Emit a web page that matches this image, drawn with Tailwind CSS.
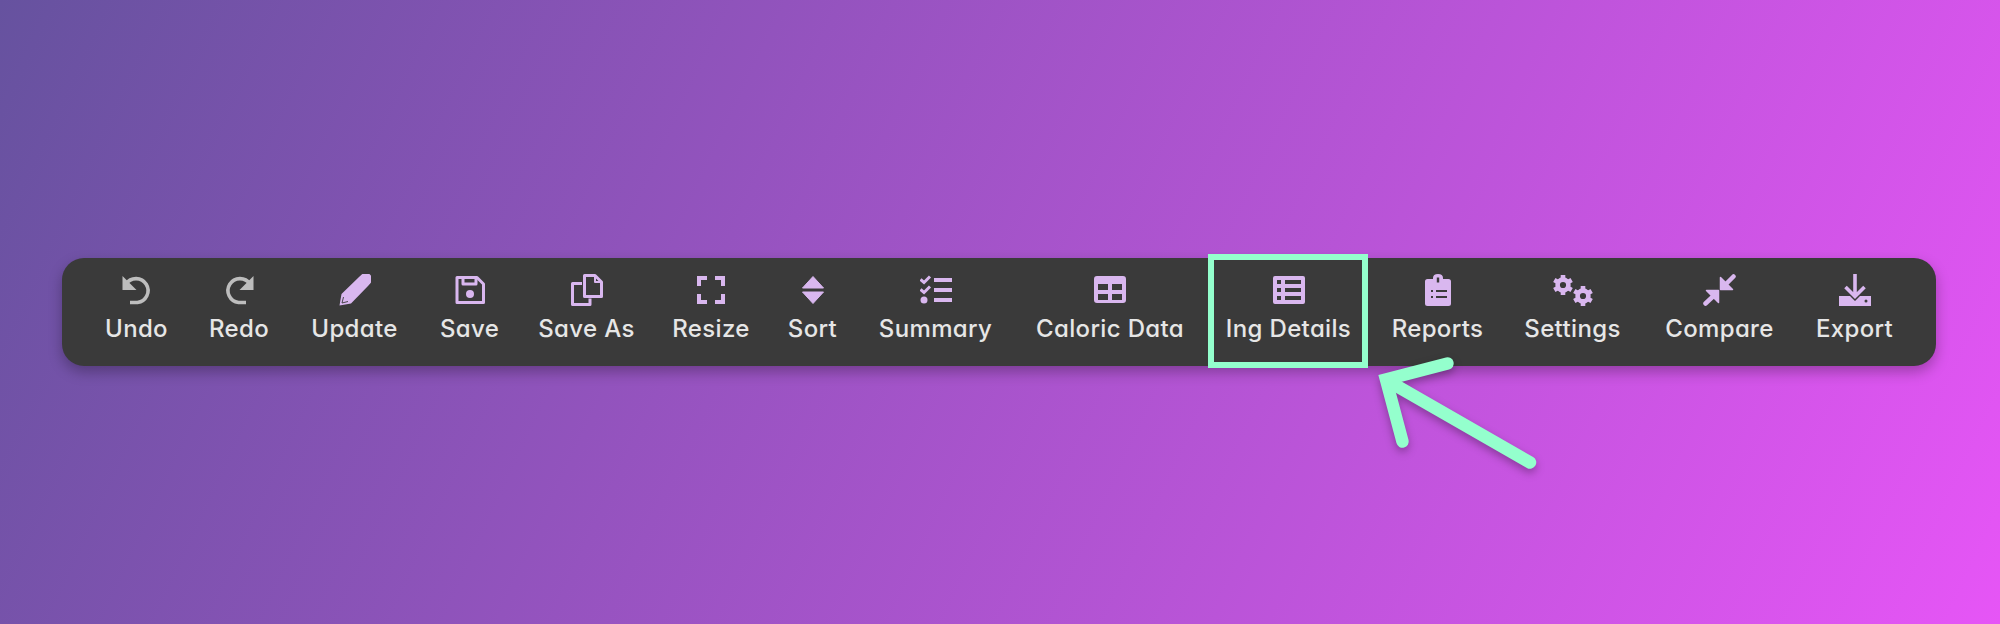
<!DOCTYPE html>
<html><head><meta charset="utf-8"><script src="https://cdn.jsdelivr.net/npm/@tailwindcss/browser@4"></script></head>
<body class="m-0">
<div class="relative w-[2000px] h-[624px] overflow-hidden pt-[258px] pl-[62px] bg-[linear-gradient(115deg,#66529f_0%,#e655f6_100%)] font-['Inter','Liberation_Sans',sans-serif] [font-feature-settings:'cv11']">
  <div class="relative flex w-[1874px] h-[108px] pl-[22.5px] rounded-[22px] bg-[#3a3a3a] shadow-[0_6px_14px_rgba(0,0,0,0.28)] text-[24px] leading-[30px] tracking-[0.35px] text-[#e6e6e6] font-medium">

    <div class="w-[104px] flex flex-col items-center pt-4 gap-2 shrink-0"><svg class="w-8 h-8" viewBox="0 0 32 32" fill="none" stroke="#bdbdbd" stroke-width="3.6"><path d="M5 10A12 12 0 1 1 16.5 28.5H9"/><path d="M1.5 2V16H15.5Z" fill="#bdbdbd" stroke="none"/></svg><span>Undo</span></div>

    <div class="w-[101px] flex flex-col items-center pt-4 gap-2 shrink-0"><svg class="w-8 h-8" viewBox="0 0 32 32" fill="none" stroke="#bdbdbd" stroke-width="3.6"><path d="M27 10A12 12 0 1 0 15.5 28.5H23"/><path d="M30.5 2V16H16.5Z" fill="#bdbdbd" stroke="none"/></svg><span>Redo</span></div>

    <div class="w-[130px] flex flex-col items-center pt-4 gap-2 shrink-0"><svg class="w-8 h-8" viewBox="0 0 32 32" fill="#d9b7ef"><path d="M0.5 31.5L2.5 20L20 3L22.5 0.8A5.2 5.2 0 0 1 31.2 9.5L29 12L12 29.5Z"/><path d="M4.5 23L3 29L9 27.5" fill="none" stroke="#3a3a3a" stroke-width="0.9"/></svg><span>Update</span></div>

    <div class="w-[100px] flex flex-col items-center pt-4 gap-2 shrink-0"><svg class="w-8 h-8" viewBox="0 0 32 32" fill="none" stroke="#d9b7ef" stroke-width="3" stroke-linejoin="round"><path d="M3 3.5H23L29.5 10V28.5H3Z"/><path d="M9 3.5V10H22V3.5"/><circle cx="16" cy="20" r="4" fill="#d9b7ef" stroke="none"/></svg><span>Save</span></div>

    <div class="w-[134px] flex flex-col items-center pt-4 gap-2 shrink-0"><svg class="w-8 h-8" viewBox="0 0 32 32" fill="none" stroke="#d9b7ef" stroke-width="3" stroke-linejoin="round"><path d="M13.5 1.5H24L30.5 8V22.5H13.5Z"/><path d="M24 1.5V8H30.5" stroke-width="2"/><path d="M11 9.5H1.5V30.5H19V24.5"/></svg><span>Save As</span></div>

    <div class="w-[115px] flex flex-col items-center pt-4 gap-2 shrink-0"><svg class="w-8 h-8" viewBox="0 0 32 32" fill="#d9b7ef"><path d="M2 2H12V6H6V12H2ZM20 2H30V12H26V6H20ZM2 20H6V26H12V30H2ZM26 20H30V30H20V26H26Z"/></svg><span>Resize</span></div>

    <div class="w-[88px] flex flex-col items-center pt-4 gap-2 shrink-0"><svg class="w-8 h-8" viewBox="0 0 32 32" fill="#d9b7ef" stroke="#d9b7ef" stroke-width="1" stroke-linejoin="round"><path d="M16 2.5L26.5 14H5.5Z"/><path d="M5.5 18H26.5L16 29.5Z"/></svg><span>Sort</span></div>

    <div class="w-[158px] flex flex-col items-center pt-4 gap-2 shrink-0"><svg class="w-8 h-8" viewBox="0 0 32 32" fill="#d9b7ef"><path d="M14 4H32V8H14ZM14 14H32V18H14ZM14 24H32V28H14Z"/><path d="M0.5 5.5L4 8.5L10 2.5M0.5 15.5L4 18.5L10 12.5" fill="none" stroke="#d9b7ef" stroke-width="3"/><circle cx="4" cy="26" r="3.5"/></svg><span>Summary</span></div>

    <div class="w-[191px] flex flex-col items-center pt-4 gap-2 shrink-0"><svg class="w-8 h-8" viewBox="0 0 32 32" fill="#d9b7ef" fill-rule="evenodd"><path d="M3 2H29A3 3 0 0 1 32 5V26A3 3 0 0 1 29 29H3A3 3 0 0 1 0 26V5A3 3 0 0 1 3 2ZM4 10V16H14V10ZM18 10V16H28V10ZM4 20V26H14V20ZM18 20V26H28V20Z"/></svg><span>Caloric Data</span></div>

    <div class="relative w-[166px] flex flex-col items-center pt-4 gap-2 shrink-0"><svg class="w-8 h-8" viewBox="0 0 32 32" fill="#d9b7ef" fill-rule="evenodd"><path d="M2 2H30A2 2 0 0 1 32 4V28A2 2 0 0 1 30 30H2A2 2 0 0 1 0 28V4A2 2 0 0 1 2 2ZM4 6V10H8V6ZM12 6V10H28V6ZM4 14V18H8V14ZM12 14V18H28V14ZM4 22V26H8V22ZM12 22V26H28V22Z"/></svg><span>Ing Details</span><div class="absolute left-[2.5px] w-[160px] top-[-4px] h-[114px] border-[6px] border-[#94ffcd]"></div></div>

    <div class="w-[132px] flex flex-col items-center pt-4 gap-2 shrink-0"><svg class="w-8 h-8" viewBox="0 0 32 32" fill="#d9b7ef" fill-rule="evenodd"><path d="M11 4Q11 0 16 0T21 4L21 5H26.5A2.5 2.5 0 0 1 29 7.5V29.5A2.5 2.5 0 0 1 26.5 32H5.5A2.5 2.5 0 0 1 3 29.5V7.5A2.5 2.5 0 0 1 5.5 5H11ZM14.8 3.5V8.5H17.2V3.5ZM9 16V18H11V16ZM14 16V18H25V16ZM9 22V24H11V22ZM14 22V24H25V22Z"/></svg><span>Reports</span></div>

    <div class="w-[138px] flex flex-col items-center pt-4 gap-2 shrink-0"><svg class="w-10 h-8" viewBox="0 0 40 32" fill="none" stroke="#d9b7ef"><g stroke-width="4.6"><circle cx="10" cy="11" r="5.4"/><path d="M10 1V21M1.3 6L18.7 16M1.3 16L18.7 6" stroke-dasharray="4 12 4"/><circle cx="30" cy="22" r="5.4"/><path d="M30 12V32M21.3 17L38.7 27M21.3 27L38.7 17" stroke-dasharray="4 12 4"/></g></svg><span>Settings</span></div>

    <div class="w-[156px] flex flex-col items-center pt-4 gap-2 shrink-0"><svg class="w-[33px] h-8" viewBox="0 0 33 32" fill="#d9b7ef" stroke="#d9b7ef" stroke-linejoin="round"><path d="M17.5 3.5V15.5H29.5Z" stroke-width="1.5"/><path d="M21 12L30.5 2.5" stroke-width="4.5" stroke-linecap="round"/><path d="M3.5 16.5H15.5V28.5Z" stroke-width="1.5"/><path d="M10.5 22L2.5 29.5" stroke-width="4.5" stroke-linecap="round"/></svg><span>Compare</span></div>

    <div class="w-[114px] flex flex-col items-center pt-4 gap-2 shrink-0"><svg class="w-8 h-8" viewBox="0 0 32 32" fill="#d9b7ef"><path d="M0 22H11L16 27L21 22H32V32H0Z"/><path d="M16 0V23M6.5 13L16 22.5L25.5 13" fill="none" stroke="#d9b7ef" stroke-width="3.6"/><circle cx="27" cy="27" r="1.5" fill="#3a3a3a"/></svg><span>Export</span></div>

  </div>
  <svg class="absolute left-[1370px] top-[350px] w-[180px] h-[130px] drop-shadow-[0_4px_4px_rgba(0,0,0,0.3)]" viewBox="1370 350 180 130" fill="none" stroke="#94ffcd" stroke-width="12.5" stroke-linecap="round" stroke-linejoin="miter"><path d="M1447.5 363.5L1386 379.5L1402.5 441.5"/><path d="M1530 462.5L1388 381"/></svg>
</div>
</body></html>
